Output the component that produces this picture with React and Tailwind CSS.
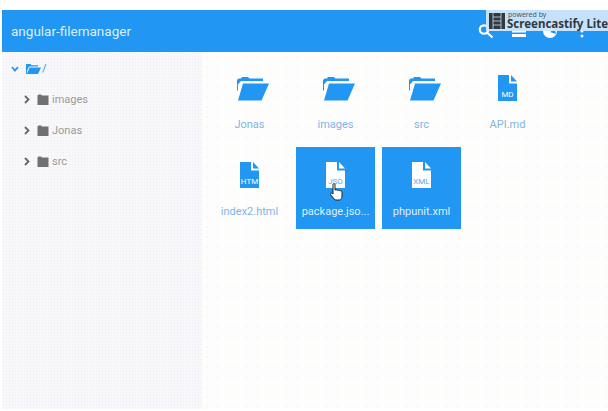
const font = { fontFamily: "Roboto, 'Liberation Sans', sans-serif" };

function Folder() {
  return (
    <svg width="32" height="24" viewBox="0 0 32 24" fill="#2196f3" className="ml-[6px] mt-[2px]">
      <path d="M0 3 L1.5 1.5 H4 L5 0 H11 L12.5 1.5 H26 V4 H4 L1 7.5 V13 L0 14 Z" />
      <path d="M6 6.5 H32 L24.5 23.5 H1 Z" />
    </svg>
  );
}

function FileIcon({ label, selected }) {
  const c = selected ? "#ffffff" : "#2196f3";
  const t = selected ? "#5aa8ee" : "#ffffff";
  return (
    <div className="relative w-[19px] h-[26px]">
      <svg width="19" height="26" viewBox="0 0 19 26" fill={c} className="block">
        <path d="M0 0 H11 V8.5 H19 V26 H0 Z" />
        <path d="M13 0 L19 6.5 H13 Z" />
      </svg>
      <span
        className="absolute left-[-3px] right-[-3px] bottom-[2px] text-center text-[8px] leading-[9px]"
        style={{ color: t }}
      >
        {label}
      </span>
    </div>
  );
}

function Cell({ name, kind, label, selected, cursor }) {
  return (
    <div
      className={`relative w-[79px] h-[82px] flex flex-col items-center ${selected ? "bg-[#2196f3] text-[#dff0fd]" : "text-[#7fb4e8]"}`}
    >
      <div className="h-[42px] mt-[15px] flex items-start justify-center">
        {kind === "folder" ? <Folder /> : <FileIcon label={label} selected={selected} />}
      </div>
      <div className="text-[11px] leading-[14px] mt-[1px] whitespace-nowrap">{name}</div>
      {cursor && (
        <svg width="15" height="18" viewBox="0 0 15 18" className="absolute left-[33px] top-[36px]">
          <path
            d="M4 1.5 C4 0.5 6 0.5 6 1.5 V7 L7 6.8 C8 6.6 8.6 7 8.8 7.4 C9.6 7 10.4 7.2 10.8 7.8 C11.6 7.5 12.8 8 13 9 V13 C13 15 12 16.5 11 17 H6 L1.5 11.5 C1 10.5 2.5 9.5 3.5 10.5 L4 11 Z"
            fill="#ffffff"
            stroke="#222222"
            strokeWidth="1"
          />
        </svg>
      )}
    </div>
  );
}

function TreeRow({ name }) {
  return (
    <div className="flex items-center h-[31px] pl-[22px] text-[#9a9a9a]">
      <svg width="6" height="9" viewBox="0 0 6 9" fill="none" stroke="#666666" strokeWidth="1.8">
        <path d="M1 1 L4.5 4.5 L1 8" />
      </svg>
      <svg width="12" height="11" viewBox="0 0 12 11" fill="#707070" className="ml-[7px]">
        <path d="M0.5 1.5 L1.5 0.5 H4 L5 1.5 H11.5 V11 H0.5 Z" />
      </svg>
      <span className="ml-[3px] text-[11px] leading-[14px]">{name}</span>
    </div>
  );
}

export default function App() {
  return (
    <div style={font} className="w-[608px] h-[411px] bg-white pl-[2px] pt-[10px] pb-[2px] flex flex-col overflow-hidden">
      <header className="relative h-[42px] shrink-0 bg-[#2196f3] flex items-center pl-[9px] text-[13.5px]">
        <span className="text-[#dceefd]">angular-filemanager</span>
        <div className="absolute left-[476px] top-[14px] flex items-start">
          <svg width="16" height="14" viewBox="0 0 16 14" fill="none" stroke="#ffffff" strokeWidth="2.2">
            <circle cx="6" cy="5.5" r="4.2" />
            <path d="M9 8.5 L14.5 13.5" />
          </svg>
          <svg width="14" height="12" viewBox="0 0 14 12" fill="#ffffff" className="ml-[18px] mt-[1px]">
            <path d="M0 0 H14 V3 H0 Z M0 4.5 H14 V7.5 H0 Z M0 9 H14 V12 H0 Z" />
          </svg>
          <svg width="14" height="14" viewBox="0 0 14 14" className="ml-[17px]">
            <circle cx="7" cy="7" r="7" fill="#ffffff" />
            <path d="M7 8 L12 5 L13 10 Z" fill="#2196f3" />
          </svg>
          <svg width="4" height="14" viewBox="0 0 4 14" fill="#ffffff" className="ml-[23px]">
            <circle cx="2" cy="2" r="1.5" />
            <circle cx="2" cy="7" r="1.5" />
            <circle cx="2" cy="12" r="1.5" />
          </svg>
        </div>
        <div className="absolute left-[484px] top-0 w-[122px] h-[21px] bg-[#cfe6fb] opacity-95 flex items-center pl-[3px] overflow-hidden">
          <svg width="16" height="16" viewBox="0 0 16 16" className="shrink-0">
            <rect width="16" height="16" fill="#333333" />
            <path d="M4 0 V16 M12 0 V16 M4 4 H12 M4 8 H12 M4 12 H12" stroke="#cfe6fb" strokeWidth="0.8" />
          </svg>
          <div className="ml-[2px] text-[#333333] whitespace-nowrap" style={{ fontFamily: "'Noto Sans', sans-serif" }}>
            <div className="text-[7px] leading-[7px] ml-[1px] text-[#555555]">powered by</div>
            <div className="text-[11.5px] leading-[12px] font-bold">Screencastify Lite</div>
          </div>
        </div>
      </header>
      <div className="flex-1 flex min-h-0">
        <aside className="w-[200px] shrink-0 bg-[#f8f8fa] bg-[radial-gradient(#ececf6_1px,transparent_1px)] bg-[length:3px_3px] pt-[1px]">
          <div className="flex items-center h-[31px] pl-[9px] text-[#2196f3]">
            <svg width="8" height="6" viewBox="0 0 8 6" fill="none" stroke="#2196f3" strokeWidth="1.8">
              <path d="M1 1 L4 4.5 L7 1" />
            </svg>
            <svg width="15" height="10" viewBox="0 0 15 10" fill="#2196f3" className="ml-[7px]">
              <path d="M0 0 H4.5 L5.5 1.2 H12 V2.5 H3 L1 7 V10 H0 Z" />
              <path d="M3.5 3.5 H15 L12 10 H1 Z" />
            </svg>
            <span className="ml-[1px] text-[11px] leading-[14px]">/</span>
          </div>
          <TreeRow name="images" />
          <TreeRow name="Jonas" />
          <TreeRow name="src" />
        </aside>
        <main className="flex-1 bg-[#fdfdfd] bg-[radial-gradient(#fcfbe0_0.7px,transparent_0.8px)] bg-[length:10px_10px] pl-[8px] pt-[8px]">
          <div className="flex flex-wrap gap-x-[7px] gap-y-[5px] w-[380px]">
            <Cell name="Jonas" kind="folder" />
            <Cell name="images" kind="folder" />
            <Cell name="src" kind="folder" />
            <Cell name="API.md" kind="file" label="MD" />
            <Cell name="index2.html" kind="file" label="HTM" />
            <Cell name="package.jso..." kind="file" label="JSO" selected cursor />
            <Cell name="phpunit.xml" kind="file" label="XML" selected />
          </div>
        </main>
      </div>
    </div>
  );
}
